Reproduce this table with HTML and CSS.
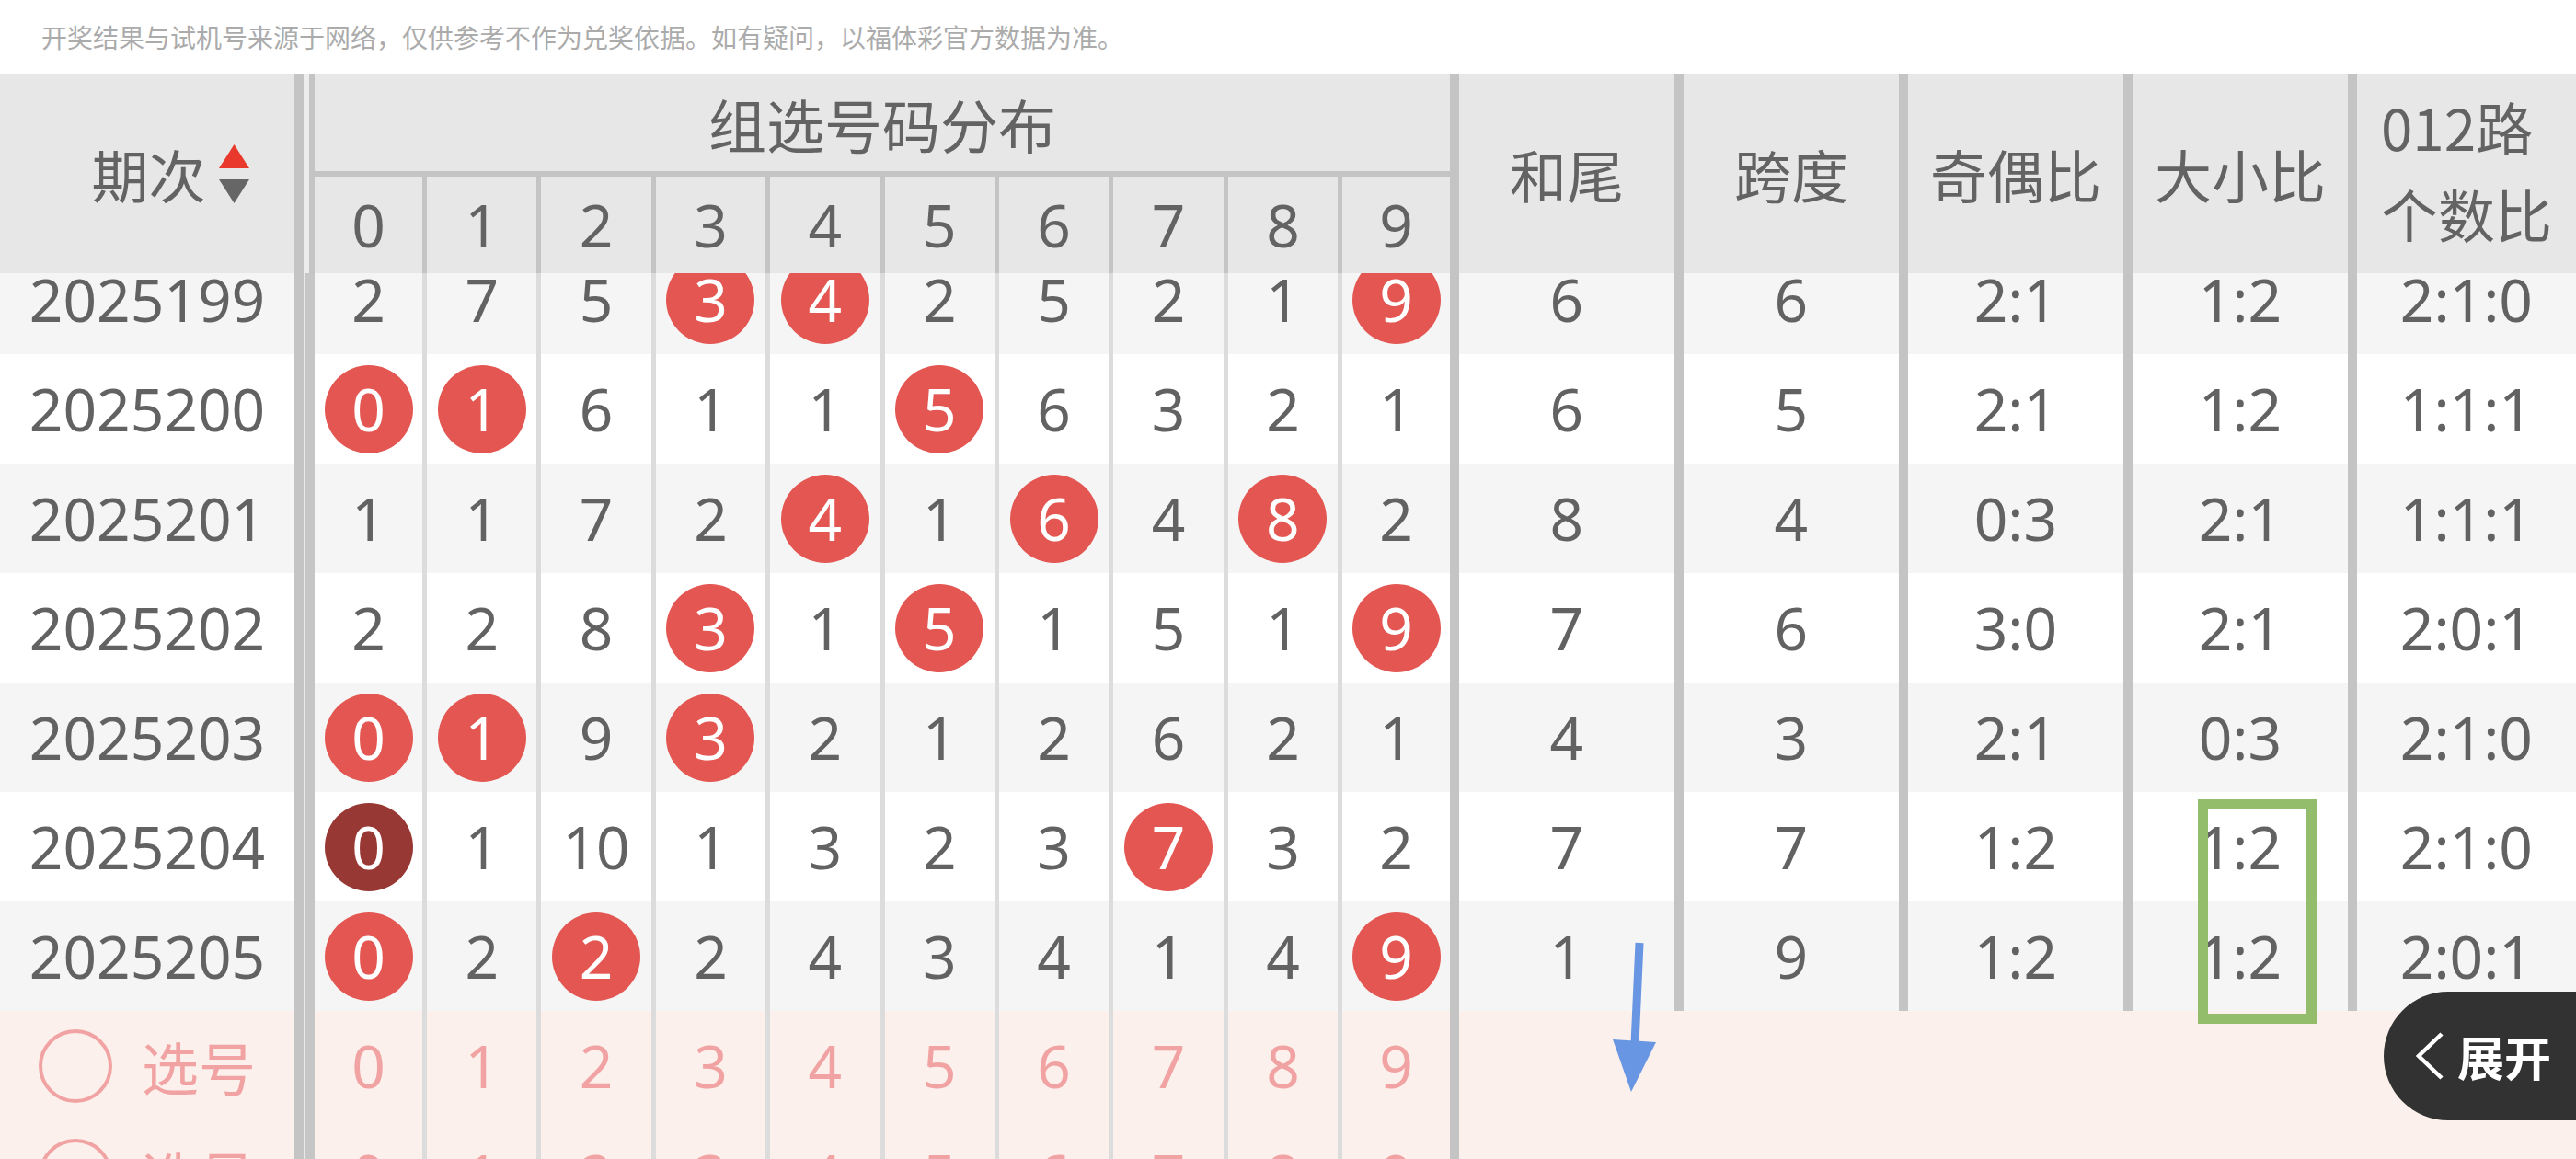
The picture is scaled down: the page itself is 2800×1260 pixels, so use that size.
FILE: index.html
```html
<!DOCTYPE html>
<html lang="zh-CN">
<head>
<meta charset="utf-8">
<title>组选号码分布</title>
<link rel="stylesheet" href="styles.css">
</head>
<body>
<div class="notice">开奖结果与试机号来源于网络，仅供参考不作为兑奖依据。如有疑问，以福体彩官方数据为准。</div>

<div class="table">
  <div class="thead grid">
    <div class="th th-period"><span>期次</span>
      <svg class="sort" width="33" height="64" viewBox="0 0 33 64"><polygon points="16.5,0 33,26 0,26" fill="#e8392c"/><polygon points="0,38 33,38 16.5,64" fill="#666"/></svg>
    </div>
    <div class="divider head"></div>
    <div class="th th-group">组选号码分布</div>
    <div class="th th-digit">0</div>
    <div class="th th-digit">1</div>
    <div class="th th-digit">2</div>
    <div class="th th-digit">3</div>
    <div class="th th-digit">4</div>
    <div class="th th-digit">5</div>
    <div class="th th-digit">6</div>
    <div class="th th-digit">7</div>
    <div class="th th-digit">8</div>
    <div class="th th-digit last">9</div>
    <div class="th th-stat">和尾</div>
    <div class="th th-stat">跨度</div>
    <div class="th th-stat">奇偶比</div>
    <div class="th th-stat">大小比</div>
    <div class="th th-stat two"><div class="lines"><span class="ln">012路</span><span class="ln">个数比</span></div></div>
  </div>

  <div class="tbody">
    <div class="tr grid alt">
      <div class="td p">2025199</div><div class="divider"></div>
      <div class="td d">2</div><div class="td d">7</div><div class="td d">5</div><div class="td d"><span class="ball">3</span></div><div class="td d"><span class="ball">4</span></div><div class="td d">2</div><div class="td d">5</div><div class="td d">2</div><div class="td d">1</div><div class="td d last"><span class="ball">9</span></div>
      <div class="td s">6</div><div class="td s">6</div><div class="td s">2:1</div><div class="td s">1:2</div><div class="td s">2:1:0</div>
    </div>
    <div class="tr grid">
      <div class="td p">2025200</div><div class="divider"></div>
      <div class="td d"><span class="ball">0</span></div><div class="td d"><span class="ball">1</span></div><div class="td d">6</div><div class="td d">1</div><div class="td d">1</div><div class="td d"><span class="ball">5</span></div><div class="td d">6</div><div class="td d">3</div><div class="td d">2</div><div class="td d last">1</div>
      <div class="td s">6</div><div class="td s">5</div><div class="td s">2:1</div><div class="td s">1:2</div><div class="td s">1:1:1</div>
    </div>
    <div class="tr grid alt">
      <div class="td p">2025201</div><div class="divider"></div>
      <div class="td d">1</div><div class="td d">1</div><div class="td d">7</div><div class="td d">2</div><div class="td d"><span class="ball">4</span></div><div class="td d">1</div><div class="td d"><span class="ball">6</span></div><div class="td d">4</div><div class="td d"><span class="ball">8</span></div><div class="td d last">2</div>
      <div class="td s">8</div><div class="td s">4</div><div class="td s">0:3</div><div class="td s">2:1</div><div class="td s">1:1:1</div>
    </div>
    <div class="tr grid">
      <div class="td p">2025202</div><div class="divider"></div>
      <div class="td d">2</div><div class="td d">2</div><div class="td d">8</div><div class="td d"><span class="ball">3</span></div><div class="td d">1</div><div class="td d"><span class="ball">5</span></div><div class="td d">1</div><div class="td d">5</div><div class="td d">1</div><div class="td d last"><span class="ball">9</span></div>
      <div class="td s">7</div><div class="td s">6</div><div class="td s">3:0</div><div class="td s">2:1</div><div class="td s">2:0:1</div>
    </div>
    <div class="tr grid alt">
      <div class="td p">2025203</div><div class="divider"></div>
      <div class="td d"><span class="ball">0</span></div><div class="td d"><span class="ball">1</span></div><div class="td d">9</div><div class="td d"><span class="ball">3</span></div><div class="td d">2</div><div class="td d">1</div><div class="td d">2</div><div class="td d">6</div><div class="td d">2</div><div class="td d last">1</div>
      <div class="td s">4</div><div class="td s">3</div><div class="td s">2:1</div><div class="td s">0:3</div><div class="td s">2:1:0</div>
    </div>
    <div class="tr grid">
      <div class="td p">2025204</div><div class="divider"></div>
      <div class="td d"><span class="ball dark">0</span></div><div class="td d">1</div><div class="td d">10</div><div class="td d">1</div><div class="td d">3</div><div class="td d">2</div><div class="td d">3</div><div class="td d"><span class="ball">7</span></div><div class="td d">3</div><div class="td d last">2</div>
      <div class="td s">7</div><div class="td s">7</div><div class="td s">1:2</div><div class="td s">1:2</div><div class="td s">2:1:0</div>
    </div>
    <div class="tr grid alt">
      <div class="td p">2025205</div><div class="divider"></div>
      <div class="td d"><span class="ball">0</span></div><div class="td d">2</div><div class="td d"><span class="ball">2</span></div><div class="td d">2</div><div class="td d">4</div><div class="td d">3</div><div class="td d">4</div><div class="td d">1</div><div class="td d">4</div><div class="td d last"><span class="ball">9</span></div>
      <div class="td s">1</div><div class="td s">9</div><div class="td s">1:2</div><div class="td s">1:2</div><div class="td s">2:0:1</div>
    </div>

    <div class="tr grid pick">
      <div class="td p pk"><span class="radio"></span><span class="pk-label">选号</span></div><div class="divider"></div>
      <div class="td d">0</div><div class="td d">1</div><div class="td d">2</div><div class="td d">3</div><div class="td d">4</div><div class="td d">5</div><div class="td d">6</div><div class="td d">7</div><div class="td d">8</div><div class="td d last">9</div>
      <div class="rest"></div>
    </div>
    <div class="tr grid pick">
      <div class="td p pk"><span class="radio"></span><span class="pk-label">选号</span></div><div class="divider"></div>
      <div class="td d">0</div><div class="td d">1</div><div class="td d">2</div><div class="td d">3</div><div class="td d">4</div><div class="td d">5</div><div class="td d">6</div><div class="td d">7</div><div class="td d">8</div><div class="td d last">9</div>
      <div class="rest"></div>
    </div>
  </div>
</div>

<div class="mark-box"></div>
<svg class="mark-arrow" width="70" height="180" viewBox="0 0 70 180">
  <line x1="37" y1="10" x2="32" y2="120" stroke="#6896e2" stroke-width="9"/>
  <polygon points="8,115 55,118 28,172" fill="#6896e2"/>
</svg>

<div class="expand">
  <svg class="chev" width="32" height="52" viewBox="0 0 32 52"><polyline points="29,2 4,26 29,50" fill="none" stroke="#fff" stroke-width="4.5"/></svg>
  <span>展开</span>
</div>
</body>
</html>
```

FILE: styles.css
```css
* {
  box-sizing: border-box;
  margin: 0;
  padding: 0;
}

html, body {
  width: 2800px;
  height: 1260px;
  overflow: hidden;
  background: #fff;
}

body {
  position: relative;
  font-family: "Noto Sans", "Noto Sans CJK SC", sans-serif;
  color: #626262;
}

.notice {
  height: 80px;
  display: flex;
  align-items: center;
  padding-left: 45px;
  font-family: "Noto Sans CJK SC", sans-serif;
  font-size: 28px;
  color: #ababab;
  white-space: nowrap;
}

.grid {
  display: grid;
  grid-template-columns: 320px 22px 122px repeat(8, 124.4px) 116.8px 244px 244px 244px 244px 248px;
}

/* header */
.thead {
  position: relative;
  z-index: 2;
  grid-template-rows: 112px 105px;
  background: #e7e7e7;
}

.th {
  display: flex;
  align-items: center;
  justify-content: center;
  font-size: 62px;
  line-height: 1;
  color: #636363;
}

.th-period {
  grid-row: 1 / 3;
  padding-left: 50px;
  gap: 14px;
  font-family: "Noto Sans CJK SC", sans-serif;
}

.divider {
  background: linear-gradient(to right, #c4c4c4 0 10px, #e9e9e9 10px 12px, #c6c6c6 12px 22px);
}

.divider.head {
  grid-row: 1 / 3;
  background: linear-gradient(to right, #c4c4c4 0 10px, #ededed 10px 16px, #c4c4c4 16px 22px);
}

.th-group {
  grid-column: span 10;
  grid-row: 1;
  border-bottom: 6px solid #c4c4c4;
  font-size: 63px;
  font-family: "Noto Sans CJK SC", sans-serif;
}

.th-digit {
  grid-row: 2;
  font-size: 64px;
  border-right: 5px solid #c4c4c4;
}

.th-digit.last {
  border-right: none;
}

.th-stat {
  grid-row: 1 / 3;
  border-left: 10px solid #c4c4c4;
  font-family: "Noto Sans CJK SC", sans-serif;
}

.th-stat.two {
  padding-bottom: 8px;
}

.th-stat.two .lines {
  text-align: left;
}

.th-stat.two .ln {
  display: block;
  height: 95px;
  line-height: 95px;
}

/* body */
.tbody {
  margin-top: -31px;
}

.tr {
  height: 119px;
  background: #fff;
}

.tr.alt {
  background: #f5f5f5;
}

.td {
  display: flex;
  align-items: center;
  justify-content: center;
  font-size: 64px;
  line-height: 1;
  white-space: nowrap;
}

.td.d {
  border-right: 5px solid #dcdcdc;
}

.td.d.last {
  border-right: none;
}

.td.s {
  border-left: 10px solid #c4c4c4;
}

.ball {
  width: 96px;
  height: 96px;
  border-radius: 50%;
  background: #e35651;
  color: #fff;
  display: flex;
  align-items: center;
  justify-content: center;
}

.ball.dark {
  background: #983835;
}

/* pick rows */
.tr.pick {
  background: #fbf0eb;
  color: #f1a3a3;
}

.pk {
  gap: 32px;
}

.radio {
  width: 80px;
  height: 80px;
  border: 4.5px solid #f1a3a3;
  border-radius: 50%;
}

.pk-label {
  font-family: "Noto Sans CJK SC", sans-serif;
  font-size: 62px;
}

.rest {
  grid-column: span 5;
  border-left: 10px solid #c4c4c4;
}

/* annotations / floating */
.mark-box {
  position: absolute;
  left: 2389px;
  top: 869px;
  width: 129px;
  height: 244px;
  border: 11px solid #93bc6b;
}

.mark-arrow {
  position: absolute;
  left: 1745px;
  top: 1015px;
}

.expand {
  position: absolute;
  left: 2591px;
  top: 1078px;
  width: 209px;
  height: 140px;
  border-radius: 70px 0 0 70px;
  background: #323232;
  display: flex;
  align-items: center;
  padding-left: 34px;
  gap: 14px;
  color: #fff;
  font-family: "Noto Sans CJK SC", sans-serif;
  font-weight: 700;
  font-size: 51px;
  line-height: 1;
}
```
